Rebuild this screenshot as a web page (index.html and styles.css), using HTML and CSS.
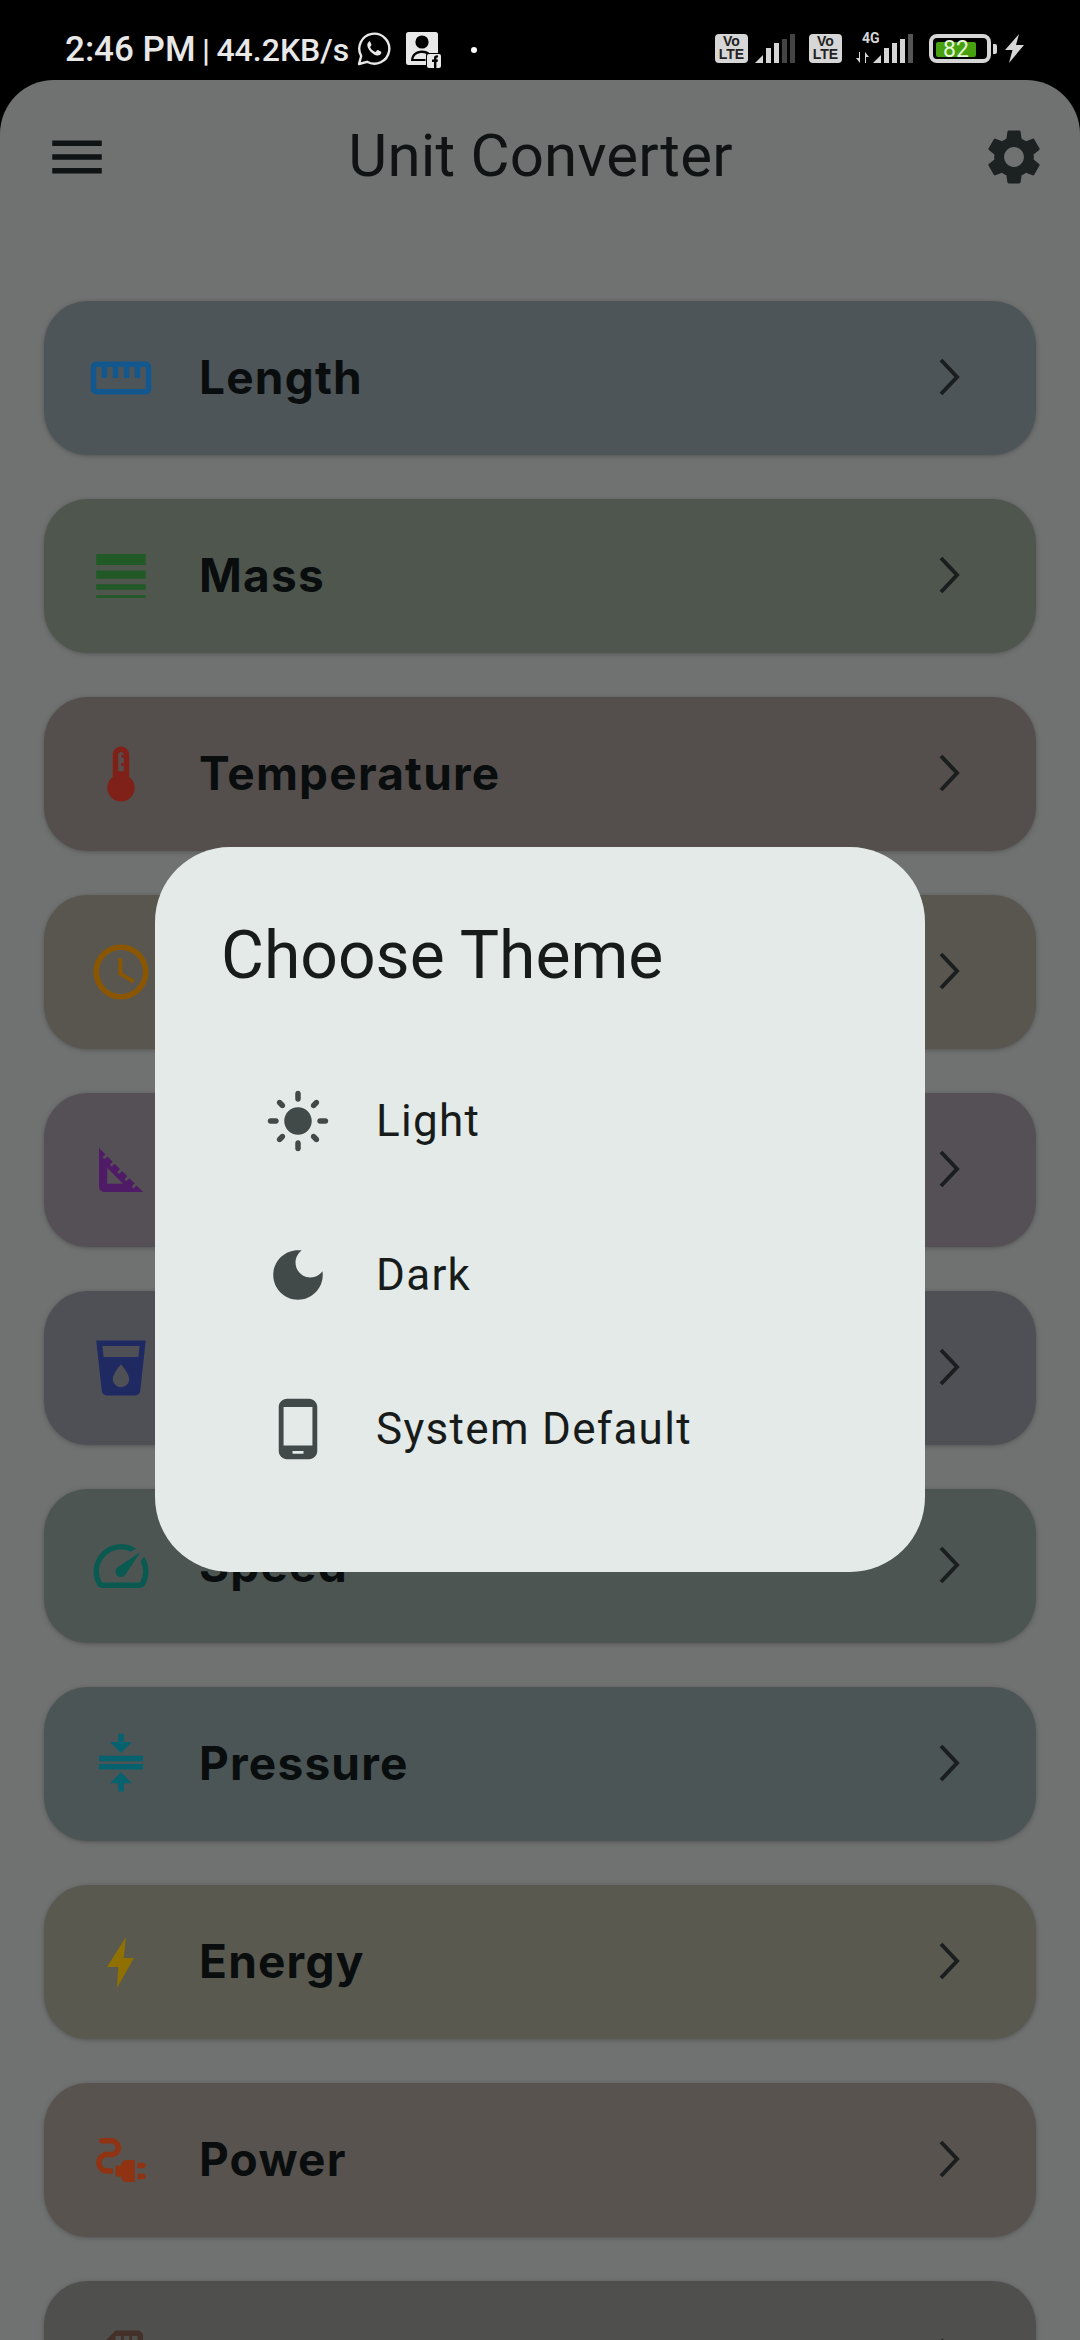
FILE: index.html
```html
<!DOCTYPE html>
<html lang="en">
<head>
  <meta charset="UTF-8" />
  <meta name="viewport" content="width=device-width, initial-scale=1" />
  <title>Unit Converter</title>
  <link rel="stylesheet" href="styles.css">
</head>
<body>
  <div class="status-bar">
    <span class="status-text"><span class="status-clock">2:46 PM</span> | 44.2KB/s</span>
    <svg class="st-whatsapp" viewBox="0 0 34 34"><path d="M2 32l2.200-8A15 15 0 1 1 10 29.800z" fill="none" stroke="#e8e8e8" stroke-width="2.400" stroke-linejoin="round"/><path d="M12.400 9.400c-1.400.7-2.600 2.600-1.900 5 1 3.400 4.600 7.400 8.400 8.800 2.400.9 4.500-.2 5.200-1.700.4-.9.3-1.600 0-1.800l-3-1.600c-.4-.2-.7-.1-1 .2l-1.200 1.400c-.3.3-.6.3-1 .1-2-.9-3.600-2.400-4.600-4.400-.2-.4-.1-.6.1-.9l.9-1.100c.2-.3.2-.6.1-.9l-1.300-3c-.2-.4-.9-.4-1.700-.1z" fill="#e8e8e8"/></svg>
    <svg class="st-contact" viewBox="0 0 36 36"><rect x="0" y="0" width="32" height="33" rx="2.500" fill="#e8e8e8"/><circle cx="16" cy="10" r="6.600" fill="#000"/><path d="M5 29c0-7 5-10.500 11-10.500 3 0 5 .7 7 2v2.500c-2-.8-4-2-7-2-4 0-8 2-8.500 6h12v2z" fill="#000"/><rect x="20" y="21" width="16" height="15" rx="2" fill="#000"/><rect x="21" y="22" width="14" height="14" rx="2" fill="#e8e8e8"/><path d="M28 36v-6h-2v-2.400h2v-1.600c0-2 1.200-2.800 4-2.600v2.200c-1.200 0-1.600.1-1.600.8v1.200h1.600l-.4 2.400h-1.200v6z" fill="#000"/></svg>
    <span class="st-dot"></span>

    <div class="status-right">
      <span class="volte"><span>Vo</span><span>LTE</span></span>
      <svg class="st-signal" viewBox="0 0 40 29"><path d="M0 29l8-8v8z" fill="#d6d6d6"/><rect x="11" y="14" width="5" height="15" fill="#d6d6d6"/><rect x="19" y="9" width="5" height="20" fill="#d6d6d6"/><rect x="27" y="5" width="5" height="24" fill="#444"/><rect x="35" y="0" width="5" height="29" fill="#444"/></svg>
      <span class="volte volte-second"><span>Vo</span><span>LTE</span></span>
      <span class="net-type">
        <span class="net-label">4G</span>
        <svg class="net-arrows" viewBox="0 0 14 11"><path d="M4 0v11L0 6h3V0zM9 11V0l4 5h-3v6z" fill="#d6d6d6"/></svg>
      </span>
      <svg class="st-signal st-signal-two" viewBox="0 0 40 29"><path d="M0 29l8-8v8z" fill="#d6d6d6"/><rect x="11" y="14" width="5" height="15" fill="#d6d6d6"/><rect x="19" y="9" width="5" height="20" fill="#d6d6d6"/><rect x="27" y="5" width="5" height="24" fill="#d6d6d6"/><rect x="35" y="0" width="5" height="29" fill="#555"/></svg>
      <span class="battery"><span class="battery-fill"><span class="battery-level">82</span></span></span>
      <span class="battery-nub"></span>
      <svg class="st-bolt" viewBox="0 0 19 29"><path d="M14 0L0 16h7.500L4 29l15-18h-8z" fill="#d6d6d6"/></svg>
    </div>
  </div>

  <div class="screen">
    <header class="app-bar">
      <svg class="icon" viewBox="0 0 24 24" fill="#0f1314"><path d="M3 18h18v-2H3v2zm0-5h18v-2H3v2zm0-7v2h18V6H3z"/></svg>
      <h1 class="app-title">Unit Converter</h1>
      <svg class="icon" viewBox="0 0 24 24" fill="#1c2122"><path d="M19.140 12.940c.04-.3.06-.61.06-.94 0-.32-.02-.64-.07-.94l2.030-1.580c.18-.14.23-.41.12-.61l-1.920-3.320c-.12-.22-.37-.29-.59-.22l-2.390.96c-.5-.38-1.030-.7-1.620-.94l-.36-2.540c-.04-.24-.24-.41-.48-.41h-3.840c-.24 0-.43.17-.47.41l-.36 2.540c-.59.24-1.130.57-1.620.94l-2.390-.96c-.22-.08-.47 0-.59.22L2.740 8.870c-.12.21-.08.47.12.61l2.030 1.580c-.05.3-.09.63-.09.94s.02.64.07.94l-2.030 1.580c-.18.14-.23.41-.12.61l1.920 3.320c.12.22.37.29.59.22l2.390-.96c.5.38 1.030.7 1.620.94l.36 2.540c.05.24.24.41.48.41h3.840c.24 0 .44-.17.47-.41l.36-2.540c.59-.24 1.130-.56 1.620-.94l2.390.96c.22.08.47 0 .59-.22l1.920-3.320c.12-.22.07-.47-.12-.61l-2.010-1.580zM12 15.600c-1.980 0-3.600-1.620-3.600-3.600s1.620-3.600 3.600-3.600 3.600 1.620 3.600 3.600-1.620 3.600-3.600 3.600z"/></svg>
    </header>

    <main class="unit-list">
      <a class="unit-card card-length">
        <svg class="icon" viewBox="0 0 24 24" fill="#12588f"><path d="M21 6H3c-1.100 0-2 .9-2 2v8c0 1.100.9 2 2 2h18c1.100 0 2-.9 2-2V8c0-1.100-.9-2-2-2zm0 10H3V8h2v4h2V8h2v4h2V8h2v4h2V8h2v4h2V8h2v8z"/></svg>
        <span class="unit-name">Length</span>
        <svg class="chevron" viewBox="0 0 24 40"><path d="M4 3l16 17L4 37"/></svg>
      </a>
      <a class="unit-card card-mass">
        <svg class="icon" viewBox="0 0 24 24" fill="#225a27"><path d="M3 17h18v-2H3v2zm0 3h18v-1H3v1zm0-7h18v-3H3v3zm0-9v4h18V4H3z"/></svg>
        <span class="unit-name">Mass</span>
        <svg class="chevron" viewBox="0 0 24 40"><path d="M4 3l16 17L4 37"/></svg>
      </a>
      <a class="unit-card card-temp">
        <svg class="icon" viewBox="0 0 24 24" fill="#7f2118"><path d="M15 13V5c0-1.660-1.340-3-3-3S9 3.340 9 5v8c-1.210.91-2 2.370-2 4 0 2.760 2.240 5 5 5s5-2.240 5-5c0-1.630-.79-3.090-2-4zm-4-8c0-.55.45-1 1-1s1 .45 1 1h-1v1h1v2h-1v1h1v2h-2V5z"/></svg>
        <span class="unit-name">Temperature</span>
        <svg class="chevron" viewBox="0 0 24 40"><path d="M4 3l16 17L4 37"/></svg>
      </a>
      <a class="unit-card card-time">
        <svg class="icon" viewBox="0 0 24 24" fill="#8a5700"><path d="M11.990 2C6.470 2 2 6.480 2 12s4.470 10 9.990 10C17.520 22 22 17.520 22 12S17.520 2 11.990 2zM12 20c-4.420 0-8-3.580-8-8s3.580-8 8-8 8 3.580 8 8-3.580 8-8 8z"/><path d="M12.500 7H11v6l5.250 3.150.75-1.230-4.500-2.670z"/></svg>
        <span class="unit-name">Time</span>
        <svg class="chevron" viewBox="0 0 24 40"><path d="M4 3l16 17L4 37"/></svg>
      </a>
      <a class="unit-card card-angle">
        <svg class="icon" viewBox="0 0 24 24" fill="#4f1a66"><path d="M17.660 17.660l-1.060 1.060-.71-.71 1.060-1.060-1.940-1.940-1.060 1.060-.71-.71 1.060-1.060-1.940-1.940-1.060 1.060-.71-.71 1.060-1.060L9.700 9.700l-1.060 1.060-.71-.71 1.060-1.060-1.940-1.940-1.060 1.060-.71-.71 1.060-1.060L4 4v14c0 1.100.9 2 2 2h14l-2.340-2.340zM7 17v-5.760L12.760 17H7z"/></svg>
        <span class="unit-name">Angle</span>
        <svg class="chevron" viewBox="0 0 24 40"><path d="M4 3l16 17L4 37"/></svg>
      </a>
      <a class="unit-card card-volume">
        <svg class="icon" viewBox="0 0 24 24" fill="#1f2a63"><path d="M3 2l2.010 18.230C5.130 21.230 5.970 22 7 22h10c1.030 0 1.870-.77 1.990-1.770L21 2H3zm9 17c-1.660 0-3-1.340-3-3 0-2 3-5.400 3-5.400s3 3.400 3 5.400c0 1.660-1.340 3-3 3zm6.330-11H5.670l-.44-4h13.530l-.43 4z"/></svg>
        <span class="unit-name">Volume</span>
        <svg class="chevron" viewBox="0 0 24 40"><path d="M4 3l16 17L4 37"/></svg>
      </a>
      <a class="unit-card card-speed">
        <svg class="icon" viewBox="0 0 24 24" fill="#0b5a52"><path d="M20.380 8.570l-1.230 1.850a8 8 0 0 1-.22 7.580H5.070A8 8 0 0 1 15.580 6.850l1.850-1.230A10 10 0 0 0 3.350 19a2 2 0 0 0 1.720 1h13.850a2 2 0 0 0 1.740-1 10 10 0 0 0-.27-10.440z"/><path d="M10.590 15.410a2 2 0 0 0 2.830 0l5.660-8.490-8.490 5.660a2 2 0 0 0 0 2.830z"/></svg>
        <span class="unit-name">Speed</span>
        <svg class="chevron" viewBox="0 0 24 40"><path d="M4 3l16 17L4 37"/></svg>
      </a>
      <a class="unit-card card-pressure">
        <svg class="icon" viewBox="0 0 24 24" fill="#06626e"><path d="M8 19h3v3h2v-3h3l-4-4-4 4zm8-15h-3V1h-2v3H8l4 4 4-4zM4 9v2h16V9H4zM4 12h16v2H4z"/></svg>
        <span class="unit-name">Pressure</span>
        <svg class="chevron" viewBox="0 0 24 40"><path d="M4 3l16 17L4 37"/></svg>
      </a>
      <a class="unit-card card-energy">
        <svg class="icon" viewBox="0 0 24 24" fill="#8f7000"><path d="M13.800 2.900L6.900 13.800H11l-.5 7.700 6.200-11H13z"/></svg>
        <span class="unit-name">Energy</span>
        <svg class="chevron" viewBox="0 0 24 40"><path d="M4 3l16 17L4 37"/></svg>
      </a>
      <a class="unit-card card-power">
        <svg class="icon" viewBox="0 0 24 24" fill="#8f3312"><path d="M21 14c0-.55-.45-1-1-1h-2v2h2c.55 0 1-.45 1-1zM20 17h-2v2h2c.55 0 1-.45 1-1s-.45-1-1-1zM12 14h-2v4h2c0 1.100.9 2 2 2h3v-8h-3c-1.100 0-2 .9-2 2zM5 13c0-1.100.9-2 2-2h1.500c1.930 0 3.500-1.570 3.500-3.500S10.430 4 8.500 4H5c-.55 0-1 .45-1 1s.45 1 1 1h3.500c.83 0 1.500.67 1.500 1.500S9.330 9 8.500 9H7c-2.210 0-4 1.790-4 4s1.790 4 4 4h2v-2H7c-1.100 0-2-.9-2-2z"/></svg>
        <span class="unit-name">Power</span>
        <svg class="chevron" viewBox="0 0 24 40"><path d="M4 3l16 17L4 37"/></svg>
      </a>
      <a class="unit-card card-data">
        <svg class="icon" viewBox="0 0 24 24" fill="#45302a"><path d="M18 2h-8L4.020 8 4 20c0 1.100.9 2 2 2h12c1.100 0 2-.9 2-2V4c0-1.100-.9-2-2-2zm-6 6h-2V4h2v4zm3 0h-2V4h2v4zm3 0h-2V4h2v4z"/></svg>
        <span class="unit-name">Data</span>
        <svg class="chevron" viewBox="0 0 24 40"><path d="M4 3l16 17L4 37"/></svg>
      </a>
    </main>

    <div class="dialog">
      <h2 class="dialog-title">Choose Theme</h2>
      <div class="theme-option">
        <svg class="icon" viewBox="0 0 24 24" fill="#414a48"><path d="M12 7c-2.760 0-5 2.240-5 5s2.240 5 5 5 5-2.240 5-5-2.240-5-5-5zM2 13h2c.55 0 1-.45 1-1s-.45-1-1-1H2c-.55 0-1 .45-1 1s.45 1 1 1zm18 0h2c.55 0 1-.45 1-1s-.45-1-1-1h-2c-.55 0-1 .45-1 1s.45 1 1 1zM11 2v2c0 .55.45 1 1 1s1-.45 1-1V2c0-.55-.45-1-1-1s-1 .45-1 1zm0 18v2c0 .55.45 1 1 1s1-.45 1-1v-2c0-.55-.45-1-1-1s-1 .45-1 1zM5.990 4.580c-.39-.39-1.030-.39-1.410 0-.39.39-.39 1.030 0 1.410l1.060 1.060c.39.39 1.030.39 1.410 0s.39-1.030 0-1.410L5.990 4.580zm12.370 12.370c-.39-.39-1.030-.39-1.410 0-.39.39-.39 1.030 0 1.410l1.060 1.060c.39.39 1.030.39 1.410 0 .39-.39.39-1.030 0-1.410l-1.060-1.060zm1.060-10.960c.39-.39.39-1.030 0-1.410-.39-.39-1.030-.39-1.410 0l-1.060 1.060c-.39.39-.39 1.030 0 1.410s1.030.39 1.410 0l1.060-1.060zM7.050 18.360c.39-.39.39-1.030 0-1.410-.39-.39-1.030-.39-1.410 0l-1.060 1.060c-.39.39-.39 1.030 0 1.410s1.030.39 1.410 0l1.060-1.060z"/></svg>
        <span class="theme-label">Light</span>
      </div>
      <div class="theme-option">
        <svg class="icon" viewBox="0 0 24 24" fill="#414a48"><path d="M12 3c-4.970 0-9 4.030-9 9s4.030 9 9 9 9-4.030 9-9c0-.46-.04-.92-.1-1.360-.98 1.370-2.580 2.260-4.400 2.260-2.980 0-5.400-2.420-5.400-5.400 0-1.810.89-3.420 2.260-4.400-.44-.06-.9-.1-1.360-.1z"/></svg>
        <span class="theme-label">Dark</span>
      </div>
      <div class="theme-option">
        <svg class="icon" viewBox="0 0 24 24" fill="#414a48"><path d="M16 1H8C6.340 1 5 2.340 5 4v16c0 1.660 1.340 3 3 3h8c1.660 0 3-1.340 3-3V4c0-1.660-1.340-3-3-3zm-2 20h-4v-1h4v1zm3.250-3H6.750V4h10.500v14z"/></svg>
        <span class="theme-label">System Default</span>
      </div>
    </div>
  </div>
</body>
</html>
```

FILE: styles.css
```css
* {
  box-sizing: border-box;
}
html, body {
  height: 100%;
}
body {
  margin: 0;
  background-color: #000;
  font-family: Roboto, sans-serif;
  overflow: hidden;
}
.icon {
  width: 66px;
  height: 66px;
  flex: none;
  display: block;
}

/* status bar */
.status-bar {
  height: 80px;
  padding: 32px 56px 0 65px;
  display: flex;
  align-items: flex-start;
  color: #e8e8e8;
}
.status-text {
  font-size: 32px;
  font-weight: 500;
  line-height: 36px;
  word-spacing: -1.5px;
  white-space: nowrap;
}
.status-clock {
  font-size: 35px;
  word-spacing: 0;
}
.st-whatsapp {
  width: 34px;
  height: 34px;
  margin-left: 8px;
}
.st-contact {
  width: 36px;
  height: 36px;
  margin-left: 15px;
}
.st-dot {
  width: 6px;
  height: 6px;
  margin: 15px 0 0 29px;
  border-radius: 50%;
  background: #fff;
}
.status-right {
  margin-left: auto;
  display: flex;
  align-items: flex-start;
  padding-top: 2px;
}
.volte {
  width: 33px;
  height: 29px;
  padding-top: 1px;
  border-radius: 4px;
  background: #d6d6d6;
  color: #222;
  display: flex;
  flex-direction: column;
  align-items: center;
  font-family: "Liberation Sans", sans-serif;
  font-size: 14px;
  font-weight: 700;
  line-height: 13px;
}
.st-signal {
  width: 40px;
  height: 29px;
  margin-left: 7px;
}
.volte-second {
  margin-left: 14px;
}
.net-type {
  width: 17px;
  height: 29px;
  margin-left: 14px;
  position: relative;
}
.net-label {
  position: absolute;
  left: 6px;
  top: -3px;
  font-size: 14px;
  font-weight: 700;
  line-height: 14px;
  color: #d6d6d6;
}
.net-arrows {
  position: absolute;
  left: 0;
  bottom: 0;
  width: 14px;
  height: 11px;
}
.st-signal-two {
  margin-left: 0;
}
.battery {
  width: 62px;
  height: 29px;
  margin-left: 16px;
  padding: 4px 3px;
  border: 4px solid #d6d6d6;
  border-radius: 8px;
  display: flex;
}
.battery-fill {
  width: 40px;
  height: 15px;
  background: #46a010;
  border-radius: 2px;
  display: flex;
  justify-content: center;
  align-items: center;
}
.battery-level {
  font-size: 23px;
  line-height: 15px;
  color: #e6f5d8;
}
.battery-nub {
  width: 4px;
  height: 10px;
  margin: 10px 0 0 2px;
  border-radius: 0 2px 2px 0;
  background: #d6d6d6;
}
.st-bolt {
  width: 19px;
  height: 29px;
  margin-left: 8px;
}

/* screen */
.screen {
  position: relative;
  height: 2260px;
  border-radius: 54px 54px 0 0;
  background-color: #707271;
  overflow: hidden;
}
.app-bar {
  height: 154px;
  padding: 0 33px 0 44px;
  display: flex;
  align-items: center;
  justify-content: space-between;
}
.app-title {
  margin: 0 10px 3px 0;
  font-size: 60px;
  font-weight: 400;
  letter-spacing: 0.2px;
  color: #0f1314;
}
.unit-list {
  padding: 67px 44px 0;
  display: flex;
  flex-direction: column;
  gap: 44px;
}
.unit-card {
  height: 154px;
  flex: none;
  padding: 0 75px 0 44px;
  border-radius: 44px;
  display: flex;
  align-items: center;
  box-shadow: 0 1px 4px rgba(70, 72, 72, 0.7);
}
.unit-name {
  flex: 1;
  margin: 0 0 2px 45px;
  font-family: Inter, sans-serif;
  font-size: 46px;
  font-weight: 700;
  letter-spacing: 1.2px;
  color: #0a0d0e;
}
.chevron {
  width: 24px;
  height: 40px;
  margin-bottom: 2px;
  fill: none;
  stroke: #1a1e1f;
  stroke-width: 4px;
}
.card-length { background: #4d5558; }
.card-mass { background: #4f564e; }
.card-temp { background: #544f4d; }
.card-time { background: #595650; }
.card-angle { background: #555056; }
.card-volume { background: #4e5056; }
.card-speed { background: #4d5553; }
.card-pressure { background: #4b5555; }
.card-energy { background: #595950; }
.card-power { background: #59534f; }
.card-data { background: #4f4f4d; }

/* theme dialog */
.dialog {
  position: absolute;
  left: 155px;
  top: 767px;
  width: 770px;
  height: 725px;
  padding: 71px 66px 0 66px;
  border-radius: 75px;
  background-color: #e4eae8;
}
.dialog-title {
  margin: 0 0 51px;
  font-size: 66px;
  font-weight: 400;
  line-height: 75px;
  color: #171c1b;
}
.theme-option {
  height: 154px;
  padding-left: 44px;
  display: flex;
  align-items: center;
}
.theme-label {
  margin-left: 45px;
  font-size: 44px;
  letter-spacing: 1.3px;
  color: #171c1b;
}
```
